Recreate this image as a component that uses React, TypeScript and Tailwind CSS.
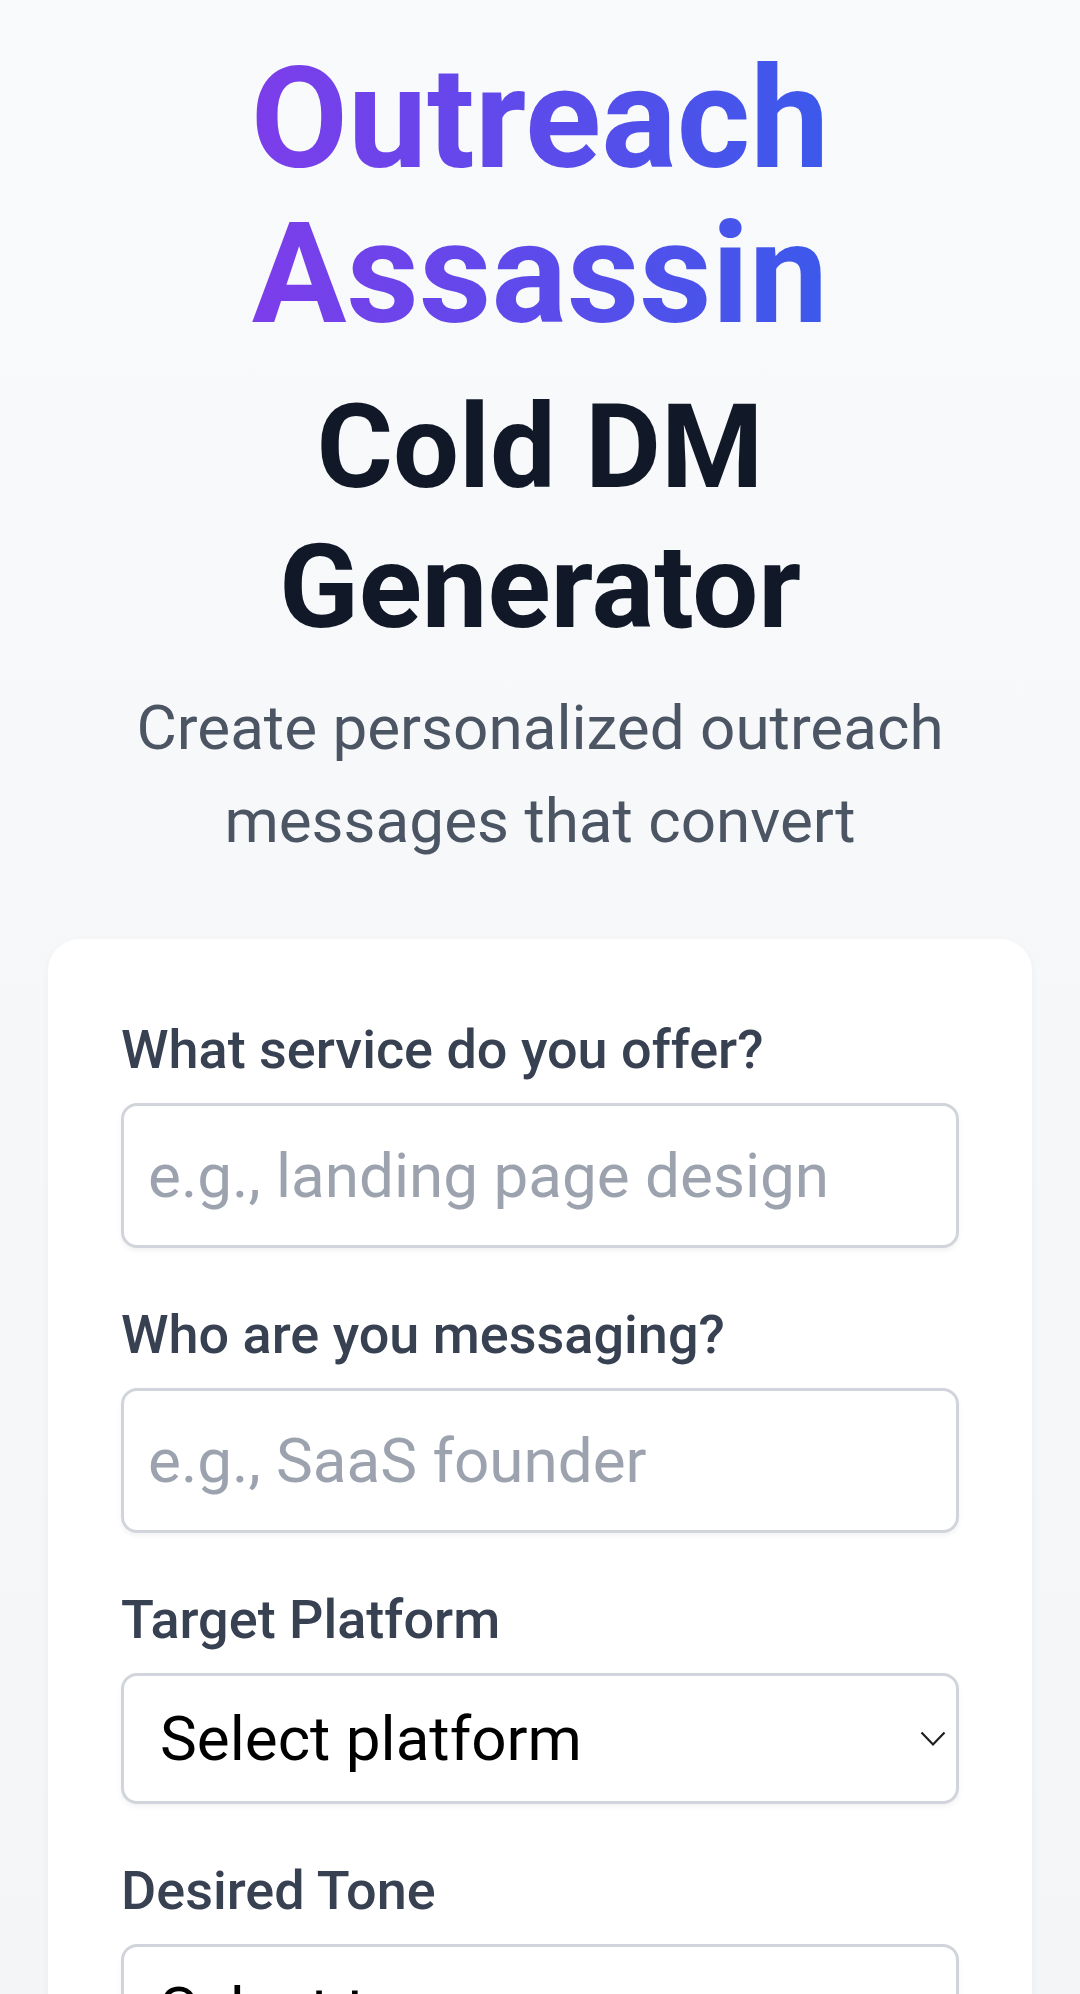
import React from "react";

function Chevron() {
  return (
    <svg
      className="pointer-events-none absolute right-[13px] top-1/2 -translate-y-1/2"
      width="26"
      height="16"
      viewBox="0 0 26 16"
      fill="none"
    >
      <path d="M1.5 1.5 L13 13.5 L24.5 1.5" stroke="#1f1f1f" strokeWidth="2.2" />
    </svg>
  );
}

function Field({ label, placeholder }: { label: string; placeholder: string }) {
  return (
    <div>
      <label className="mb-[16px] block text-[54px] font-medium leading-[74px] text-[#374151]">
        {label}
      </label>
      <input
        type="text"
        placeholder={placeholder}
        className="block h-[145px] w-full rounded-[16px] border-[3px] border-[#d1d5db] bg-white px-[24px] text-[62px] text-[#111827] shadow-[0_3px_5px_rgba(0,0,0,0.05)] outline-none placeholder:text-[#9ca3af]"
      />
    </div>
  );
}

function SelectField({ label, placeholder, options }: { label: string; placeholder: string; options: string[] }) {
  return (
    <div>
      <label className="mb-[16px] block text-[54px] font-medium leading-[74px] text-[#374151]">
        {label}
      </label>
      <div className="relative">
        <select
          defaultValue=""
          className="block h-[131px] w-full appearance-none rounded-[16px] border-[3px] border-[#d1d5db] bg-white pl-[36px] pr-[60px] text-[62px] text-black shadow-[0_3px_5px_rgba(0,0,0,0.05)] outline-none"
        >
          <option value="">{placeholder}</option>
          {options.map((o) => (
            <option key={o} value={o}>
              {o}
            </option>
          ))}
        </select>
        <Chevron />
      </div>
    </div>
  );
}

export default function App() {
  return (
    <div className="min-h-screen bg-[linear-gradient(to_bottom,#f9fafb,#f3f4f6)] font-['Roboto','Noto_Sans',sans-serif]">
      <div className="px-[48px] pb-[80px] pt-[41px]">
        <h1 className="bg-[linear-gradient(to_right,#9333ea,#2563eb)] bg-clip-text text-center text-[141px] font-bold leading-[155px] text-transparent">
          <span className="block">Outreach</span>
          <span className="block">Assassin</span>
        </h1>
        <h2 className="mt-[26px] text-center text-[117px] font-bold leading-[140px] text-[#111827]">
          <span className="block">Cold DM</span>
          <span className="block">Generator</span>
        </h2>
        <p className="mt-[24px] text-center text-[62px] leading-[93px] text-[#4b5563]">
          Create personalized outreach messages that convert
        </p>

        <div className="mt-[72px] rounded-[32px] bg-white px-[73px] pb-[74px] pt-[74px] shadow-[0_3px_10px_rgba(0,0,0,0.04)]">
          <div className="flex flex-col gap-[50px]">
            <Field label="What service do you offer?" placeholder="e.g., landing page design" />
            <Field label="Who are you messaging?" placeholder="e.g., SaaS founder" />
            <SelectField
              label="Target Platform"
              placeholder="Select platform"
              options={["LinkedIn", "Twitter / X", "Instagram", "Email"]}
            />
            <SelectField
              label="Desired Tone"
              placeholder="Select tone"
              options={["Professional", "Friendly", "Casual", "Bold"]}
            />
            <button className="h-[150px] w-full rounded-[16px] bg-[linear-gradient(to_right,#9333ea,#2563eb)] text-[60px] font-semibold text-white">
              Generate DM
            </button>
          </div>
        </div>
      </div>
    </div>
  );
}
